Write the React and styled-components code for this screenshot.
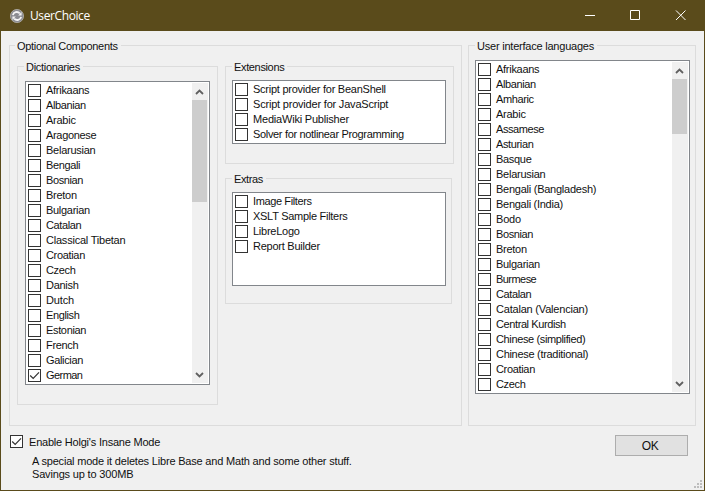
import React from 'react';
import styled, { createGlobalStyle } from 'styled-components';

const GlobalStyle = createGlobalStyle`
  * { box-sizing: border-box; }
  body { margin: 0; background: #5a4b1b; overflow: hidden; }
`;

const Window = styled.div`
  width: 705px;
  height: 491px;
  display: flex;
  flex-direction: column;
  padding: 0 1px 1px;
  background: #5a4b1b;
  color: #111;
  font: 11px/15px 'Liberation Sans', Arial, sans-serif;
  white-space: nowrap;
`;

const TitleBar = styled.header`
  height: 31px;
  flex: none;
  display: flex;
  align-items: center;
  padding-left: 9px;
`;

const Title = styled.h1`
  flex: 1;
  margin: 0 0 0 6px;
  color: #fff;
  font: 400 12px/18px 'Open Sans', 'Noto Sans', sans-serif;
  letter-spacing: -0.4px;
`;

const Controls = styled.svg`
  width: 137px;
  height: 31px;
  fill: none;
  stroke: #fff;
`;

const Body = styled.main`
  flex: 1;
  background: #f0f0f0;
`;

const Panels = styled.div`
  display: flex;
  gap: 6px;
  padding: 14px 8px 0;
`;

const Group = styled.section`
  width: ${(p) => p.$w}px;
  height: ${(p) => p.$h}px;
  border: 1px solid #dcdcdc;
  padding: 0 ${(p) => p.$pad ?? 7}px;
`;

const GroupTitle = styled.h2`
  width: fit-content;
  height: 15px;
  margin: -7px 0 ${(p) => p.$gap}px ${(p) => p.$shift ?? -1}px;
  padding: 0 3px 0 2px;
  background: #f0f0f0;
  font: inherit;
  letter-spacing: ${(p) => p.$ls ?? 0}px;
`;

const Columns = styled.div`
  display: flex;
  align-items: flex-start;
  gap: 7px;
`;

const Stack = styled.div`
  display: flex;
  flex-direction: column;
  gap: 14px;
`;

const ListBox = styled.div`
  width: ${(p) => p.$w}px;
  height: ${(p) => p.$h}px;
  display: flex;
  justify-content: space-between;
  border: 1px solid #82868b;
  background: #fff;
  padding: 1px;
`;

const Items = styled.ul`
  list-style: none;
  margin: 0;
  padding: 0 0 0 1px;
`;

const Item = styled.li`
  height: 15px;
  display: flex;
  align-items: center;
  gap: 5px;
`;

const Box = styled.span`
  width: 13px;
  height: 13px;
  flex: none;
  display: flex;
  border: 1px solid #333;
  background: #fff;
`;

const Text = styled.span`
  letter-spacing: ${(p) => p.$ls ?? 0}px;
`;

const ScrollBar = styled.div`
  width: 16px;
  display: flex;
  flex-direction: column;
  background: #f0f0f0;
`;

const Arrow = styled.svg`
  width: 15px;
  height: 17px;
  flex: none;
  fill: none;
  stroke: #606060;
  stroke-width: 1.8;
`;

const Thumb = styled.div`
  width: 15px;
  height: ${(p) => p.$h}px;
  margin-bottom: auto;
  background: #cdcdcd;
`;

const Footer = styled.footer`
  display: flex;
  justify-content: space-between;
  align-items: flex-start;
  padding: 9px 16px 0 9px;
`;

const ModeRow = styled.label`
  height: 13px;
  display: flex;
  align-items: center;
  gap: 6px;

  ${Text} {
    padding-top: 2px;
  }
`;

const Note = styled.p`
  margin: 7px 0 0 22px;
  line-height: 13px;
`;

const Button = styled.button`
  width: 73px;
  height: 21px;
  padding: 1px 3px 0 0;
  border: 1px solid #adadad;
  background: #e1e1e1;
  color: #111;
  font: 12px/18px 'Liberation Sans', Arial, sans-serif;
  letter-spacing: -0.4px;
`;

const Grip = styled.svg`
  position: fixed;
  left: 694px;
  top: 480px;
  width: 8px;
  height: 8px;
  fill: #bdbdbd;
`;

const Check = ({ checked }) => (
  <Box>
    {checked && (
      <svg width="11" height="11" fill="none" stroke="#333" strokeWidth="1.2">
        <path d="M1.2 5.5l3 3L10 2.4" />
      </svg>
    )}
  </Box>
);

const CheckList = ({ items, checked, width, height, thumb }) => (
  <ListBox $w={width} $h={height}>
    <Items>
      {items.map(([name, spacing]) => (
        <Item key={name}>
          <Check checked={name === checked} />
          <Text $ls={spacing}>{name}</Text>
        </Item>
      ))}
    </Items>
    {thumb && (
      <ScrollBar>
        <Arrow><path d="M4 11l3.5-3.5L11 11" /></Arrow>
        <Thumb $h={thumb} />
        <Arrow><path d="M4 7l3.5 3.5L11 7" /></Arrow>
      </ScrollBar>
    )}
  </ListBox>
);

// Each entry is [label, letter spacing in px].
const dictionaries = [
  ['Afrikaans', -0.28],
  ['Albanian', -0.37],
  ['Arabic', -0.25],
  ['Aragonese', -0.33],
  ['Belarusian', -0.25],
  ['Bengali', -0.36],
  ['Bosnian', -0.38],
  ['Breton', -0.28],
  ['Bulgarian', -0.3],
  ['Catalan', -0.38],
  ['Classical Tibetan', -0.22],
  ['Croatian', -0.33],
  ['Czech', -0.34],
  ['Danish', -0.28],
  ['Dutch', -0.14],
  ['English', -0.38],
  ['Estonian', -0.34],
  ['French', -0.33],
  ['Galician', -0.34],
  ['German', -0.55],
];

const extensions = [
  ['Script provider for BeanShell', -0.25],
  ['Script provider for JavaScript', -0.2],
  ['MediaWiki Publisher', -0.2],
  ['Solver for notlinear Programming', -0.33],
];

const extras = [
  ['Image Filters', -0.38],
  ['XSLT Sample Filters', -0.28],
  ['LibreLogo', -0.25],
  ['Report Builder', -0.25],
];

const languages = [
  ['Afrikaans', -0.28],
  ['Albanian', -0.37],
  ['Amharic', -0.38],
  ['Arabic', -0.25],
  ['Assamese', -0.43],
  ['Asturian', -0.37],
  ['Basque', -0.3],
  ['Belarusian', -0.25],
  ['Bengali (Bangladesh)', -0.25],
  ['Bengali (India)', -0.27],
  ['Bodo', -0.2],
  ['Bosnian', -0.38],
  ['Breton', -0.28],
  ['Bulgarian', -0.3],
  ['Burmese', -0.55],
  ['Catalan', -0.38],
  ['Catalan (Valencian)', -0.2],
  ['Central Kurdish', -0.4],
  ['Chinese (simplified)', -0.37],
  ['Chinese (traditional)', -0.3],
  ['Croatian', -0.33],
  ['Czech', -0.34],
];

export default function App() {
  return (
    <Window>
      <GlobalStyle />
      <TitleBar>
        <svg width="14" height="14" viewBox="0 0 14 14" fill="none">
          <circle cx="7" cy="7" r="6.6" fill="#8b8c92" stroke="#b3b0a8" strokeWidth=".8" />
          <path d="M2.9 6.2C3.4 2.9 7.6 2 9.8 4.4M11.1 7.8C10.6 11.1 6.4 12 4.2 9.6" stroke="#f4f4f4" strokeWidth="1.8" />
          <path d="M11.6 3v3.4H8.2zM2.4 11V7.6h3.4z" fill="#f4f4f4" />
        </svg>
        <Title>UserChoice</Title>
        <Controls viewBox="567 0 137 31">
          <path d="M585 15.5h10" />
          <path d="M630.5 10.5h9v9h-9z" />
          <path d="M676 10.5l9.5 9.5M685.5 10.5L676 20" />
        </Controls>
      </TitleBar>
      <Body>
        <Panels>
          <Group $w={453} $h={381}>
            <GroupTitle $gap={12} $shift={-2} $ls={-0.3}>Optional Components</GroupTitle>
            <Columns>
              <Group $w={201} $h={339}>
                <GroupTitle $gap={6} $ls={-0.3}>Dictionaries</GroupTitle>
                <CheckList items={dictionaries} checked="German" width={185} height={304} thumb={102} />
              </Group>
              <Stack>
                <Group $w={229} $h={98} $pad={6}>
                  <GroupTitle $gap={5} $shift={0} $ls={-0.35}>Extensions</GroupTitle>
                  <CheckList items={extensions} width={214} height={64} />
                </Group>
                <Group $w={227} $h={126} $pad={6}>
                  <GroupTitle $gap={5} $shift={0} $ls={-0.4}>Extras</GroupTitle>
                  <CheckList items={extras} width={214} height={94} />
                </Group>
              </Stack>
            </Columns>
          </Group>
          <Group $w={228} $h={381} $pad={6}>
            <GroupTitle $gap={6} $shift={0} $ls={-0.22}>User interface languages</GroupTitle>
            <CheckList items={languages} width={215} height={334} thumb={55} />
          </Group>
        </Panels>
        <Footer>
          <div>
            <ModeRow>
              <Check checked />
              <Text $ls={-0.21}>Enable Holgi's Insane Mode</Text>
            </ModeRow>
            <Note>
              <Text $ls={-0.19}>A special mode it deletes Libre Base and Math and some other stuff.</Text>
              <br />
              <Text $ls={-0.17}>Savings up to 300MB</Text>
            </Note>
          </div>
          <Button>OK</Button>
        </Footer>
      </Body>
      <Grip>
        <path d="M6 0h2v2H6zM3 3h2v2H3zM6 3h2v2H6zM0 6h2v2H0zM3 6h2v2H3zM6 6h2v2H6z" />
      </Grip>
    </Window>
  );
}
